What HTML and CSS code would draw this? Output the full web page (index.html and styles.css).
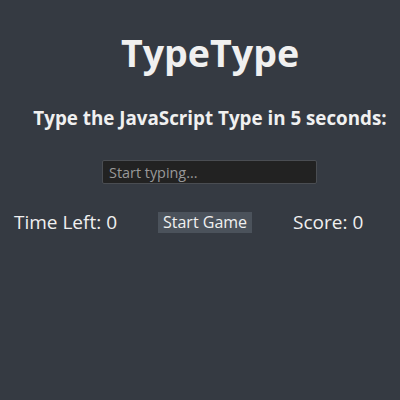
FILE: index.html
```html
<!DOCTYPE html>
<html>
<head>
<meta charset="utf-8">
<link rel="stylesheet" href="styles.css">
</head>
<body>
<div class="app">
  <h1 class="title">TypeType</h1>
  <h2 class="prompt">Type the JavaScript Type in 5 seconds:</h2>
  <input class="answer" type="text" placeholder="Start typing...">
  <div class="stats">
    <span class="time">Time Left: 0</span>
    <button class="start">Start Game</button>
    <span class="score">Score: 0</span>
  </div>
</div>
</body>
</html>
```
FILE: styles.css
```css
html, body {
  margin: 0;
  padding: 0;
  background: #353a42;
  height: 100%;
}
body {
  font-family: "Open Sans", "Noto Sans", sans-serif;
  color: #f0f0f0;
}
.app {
  display: flex;
  flex-direction: column;
  align-items: center;
  padding-left: 20px;
}
.title {
  margin: 27px 0 0 0;
  font-size: 37.6px;
  font-weight: 700;
  line-height: 52px;
}
.prompt {
  margin: 26px 0 0 0;
  font-size: 18.8px;
  font-weight: 700;
  line-height: 26px;
}
.answer {
  margin: 29px 0 0 -1px;
  width: 215px;
  height: 24px;
  box-sizing: border-box;
  background: #222;
  border: 1px solid #4a4d52;
  border-radius: 2px;
  color: #ddd;
  font-family: "Open Sans", "Noto Sans", sans-serif;
  font-size: 14.4px;
  padding: 0 6px;
  outline: none;
}
.answer::placeholder {
  color: #999;
}
.stats {
  align-self: stretch;
  margin-left: -20px;
  padding-left: 14px;
  margin-top: 25px;
  display: flex;
  align-items: center;
  font-size: 19px;
}
.start {
  margin-left: 41px;
  margin-right: 41px;
  background: #4b525b;
  color: #f0f0f0;
  border: none;
  border-radius: 0;
  font-family: "Open Sans", "Noto Sans", sans-serif;
  font-size: 16px;
  height: 21px;
  padding: 0 5px;
  line-height: 21px;
}
```
